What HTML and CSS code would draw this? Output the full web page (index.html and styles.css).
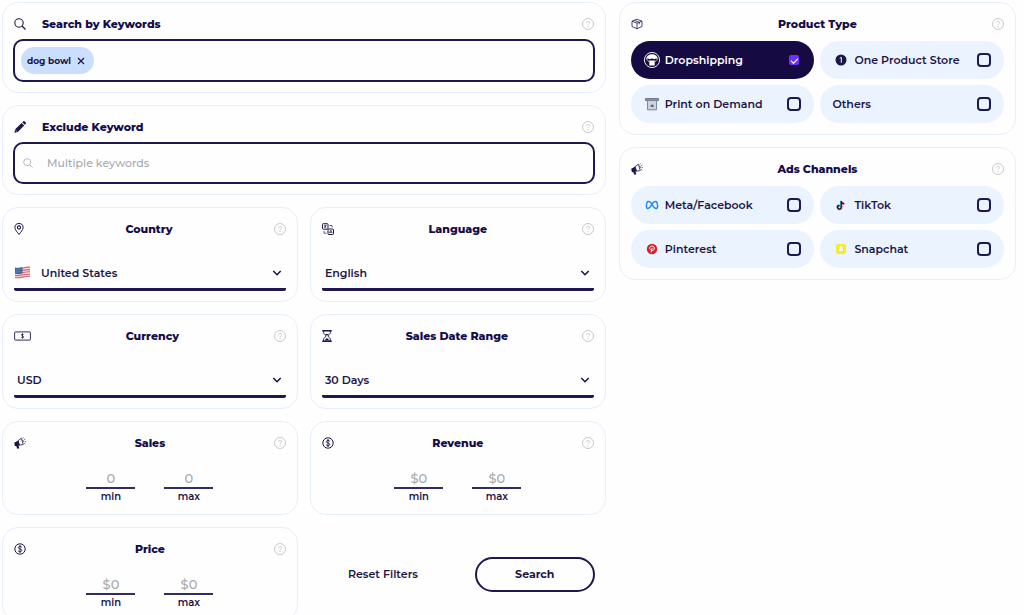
FILE: index.html
```html
<!DOCTYPE html>
<html lang="en">
<head>
    <meta charset="UTF-8">
    <meta name="viewport" content="width=device-width, initial-scale=1.0">
    <title>Product Search</title>
    <link rel="stylesheet" href="styles.css">
</head>
<body>
    <!-- Shared icons -->
    <svg class="sprite" aria-hidden="true">
        <symbol id="help" viewBox="0 0 12 12">
            <circle cx="6" cy="6" r="5.5" fill="none" stroke="currentColor" stroke-width="0.9"/>
            <path d="M4.5 4.9c0-2 3.1-2 3.1-.2 0 1.200-1.500 1.200-1.500 2.300" fill="none" stroke="currentColor" stroke-width="0.9"/>
            <circle cx="6.100" cy="8.700" r="0.600" fill="currentColor"/>
        </symbol>
        <symbol id="search" viewBox="0 0 12 12">
            <circle cx="5" cy="5" r="4.200" fill="none" stroke="currentColor" stroke-width="1.100"/>
            <path d="M8 8l3.500 3.500" stroke="currentColor" stroke-width="1.200"/>
        </symbol>
        <symbol id="horn" viewBox="0 0 12 12">
            <path d="M.2 5.800L4.300 3.400 5.800 8.200l-1.300.300.9 2.700-2.100.600-1-2.600-1.400-.2z" fill="currentColor"/>
            <path d="M4 3.700L7.300 1.200l2 6.300L5.300 8.200z" fill="none" stroke="currentColor" stroke-width="0.8"/>
            <path d="M8.300 3.200c1.300-.1 1.600 1.500.7 2M8.800 1.500l.6-1M10.200 2.800l1.200-.8M10.700 4.600l1.200.2M10.200 6.300l1 .9" fill="none" stroke="currentColor" stroke-width="0.7"/>
        </symbol>
        <symbol id="coin" viewBox="0 0 12 12">
            <circle cx="6" cy="6" r="5.200" fill="none" stroke="currentColor" stroke-width="1"/>
            <path d="M7.800 4.300C7.200 3 4.300 3.100 4.300 4.600c0 1.700 3.500 1 3.500 2.800 0 1.600-3 1.700-3.700.3M6 2v8" fill="none" stroke="currentColor" stroke-width="0.9"/>
        </symbol>
        <symbol id="chevron" viewBox="0 0 10 10">
            <path d="M1.300 3l3.700 3.700L8.700 3" fill="none" stroke="currentColor" stroke-width="1.600"/>
        </symbol>
    </svg>

    <form class="filters">
        <div class="column main">
            <section class="card wide">
                <div class="card-head">
                    <svg class="icon"><use href="#search"/></svg>
                    <label class="title" for="keywords">Search by Keywords</label>
                    <button type="button" class="help" aria-label="Help"><svg><use href="#help"/></svg></button>
                </div>
                <div class="field">
                    <span class="tag">dog bowl
                        <button type="button" aria-label="Remove dog bowl"><svg viewBox="0 0 8 8"><path d="M1 1l6 6M7 1L1 7" stroke="currentColor" stroke-width="1.200"/></svg></button>
                    </span>
                    <input type="text" id="keywords">
                </div>
            </section>

            <section class="card wide">
                <div class="card-head">
                    <svg class="icon" viewBox="0 0 12 12"><path d="M.3 11.700L1.200 8.200 7.600 1.900l2.600 2.500-6.400 6.500zM8.200 1.300L9.200.4c.5-.5 1-.4 1.500 0l1 1c.4.4.4 1 0 1.500l-.9.900z" fill="currentColor"/><path d="M1.300 9l1.600 1.500" stroke="#fff" stroke-width="0.6"/></svg>
                    <label class="title" for="exclude">Exclude Keyword</label>
                    <button type="button" class="help" aria-label="Help"><svg><use href="#help"/></svg></button>
                </div>
                <div class="field exclude">
                    <svg><use href="#search"/></svg>
                    <input type="text" id="exclude" placeholder="Multiple keywords">
                </div>
            </section>

            <section class="card">
                <div class="card-head">
                    <svg class="icon narrow" viewBox="0 0 10 12"><path d="M5 11.400C3.500 9.300.900 7 .900 4.600a4.100 4.100 0 0 1 8.200 0C9.100 7 6.500 9.300 5 11.400z" fill="none" stroke="currentColor"/><circle cx="5" cy="4.500" r="1.600" fill="none" stroke="currentColor" stroke-width="1.100"/></svg>
                    <label class="title" for="country">Country</label>
                    <button type="button" class="help" aria-label="Help"><svg><use href="#help"/></svg></button>
                </div>
                <div class="select">
                    <svg class="flag" viewBox="0 0 17 13">
                        <path d="M1 1.500C5 3 10 0 16 .8v10C11 10 6 13.500 1 12z" fill="#f3e4e8"/>
                        <path d="M8 2.300c3-.7 5-1.400 8-1M8 4.600c3-.7 5-1.300 8-1M8 6.800c3-.7 5-1.200 8-1M1 9.300c5 1.200 9-1.600 15-1M1 11.500c5 1.200 9-1.700 15-1.200" fill="none" stroke="#d9626f" stroke-width="1.200"/>
                        <path d="M1 1.500c2.500.9 5 .1 7.500-.4v6.500c-2.500.5-5 1-7.500.2z" fill="#41649f"/>
                        <path d="M2 3.600c2 .5 4 0 6-.5M2 5.800c2 .4 4 0 6-.5" stroke="#b8c8e2" stroke-width="0.600" stroke-dasharray="0.700 0.900" fill="none"/>
                    </svg>
                    <select id="country"><option>United States</option></select>
                    <svg class="chevron"><use href="#chevron"/></svg>
                </div>
            </section>

            <section class="card">
                <div class="card-head">
                    <svg class="icon" viewBox="0 0 12 12"><rect x=".5" y=".7" width="5.500" height="5.500" rx=".8" fill="none" stroke="currentColor"/><path d="M2 2.300h2.600M3.300 1.800v2M2 4.800l2.400-2M2.200 3.400l2.300 1.500" stroke="currentColor" stroke-width="0.600"/><rect x="6" y="6" width="5.500" height="5.500" rx=".8" fill="none" stroke="currentColor"/><path d="M7.300 10.200l1.500-3 1.500 3M7.800 9.300h2M2 7.800v2.400h2.500M7.500 2.500H10v2" fill="none" stroke="currentColor" stroke-width="0.700"/></svg>
                    <label class="title" for="language">Language</label>
                    <button type="button" class="help" aria-label="Help"><svg><use href="#help"/></svg></button>
                </div>
                <div class="select">
                    <select id="language"><option>English</option></select>
                    <svg class="chevron"><use href="#chevron"/></svg>
                </div>
            </section>

            <section class="card">
                <div class="card-head">
                    <svg class="icon banknote" viewBox="0 0 17 10"><rect x=".6" y=".9" width="15.800" height="8.200" rx="1" fill="none" stroke="currentColor" stroke-width="0.9"/><path d="M9.600 3.600c-.4-.8-2.200-.7-2.200.3 0 1.200 2.300.8 2.300 2 0 1.100-2 1.200-2.500.2M8.500 2.400v5.200" fill="none" stroke="currentColor" stroke-width="0.800"/></svg>
                    <label class="title" for="currency">Currency</label>
                    <button type="button" class="help" aria-label="Help"><svg><use href="#help"/></svg></button>
                </div>
                <div class="select">
                    <select id="currency"><option>USD</option></select>
                    <svg class="chevron"><use href="#chevron"/></svg>
                </div>
            </section>

            <section class="card">
                <div class="card-head">
                    <svg class="icon narrow" viewBox="0 0 10 12"><path d="M.3.800h9.400M.3 11.200h9.400" stroke="currentColor" stroke-width="1.400"/><path d="M1.600 1v1.500C1.600 4.500 4 5 4 6S1.600 7.500 1.600 9.500V11M8.400 1v1.500C8.400 4.500 6 5 6 6s2.400 1.500 2.400 3.500V11" fill="none" stroke="currentColor"/><path d="M3 4h4L5 5.700zM2.200 10.500L5 8l2.800 2.500z" fill="currentColor"/></svg>
                    <label class="title" for="dates">Sales Date Range</label>
                    <button type="button" class="help" aria-label="Help"><svg><use href="#help"/></svg></button>
                </div>
                <div class="select">
                    <select id="dates"><option>30 Days</option></select>
                    <svg class="chevron"><use href="#chevron"/></svg>
                </div>
            </section>

            <section class="card">
                <div class="card-head">
                    <svg class="icon"><use href="#horn"/></svg>
                    <h2 class="title">Sales</h2>
                    <button type="button" class="help" aria-label="Help"><svg><use href="#help"/></svg></button>
                </div>
                <div class="range">
                    <div class="limit"><input type="text" id="sales-min" placeholder="0"><label for="sales-min">min</label></div>
                    <div class="limit"><input type="text" id="sales-max" placeholder="0"><label for="sales-max">max</label></div>
                </div>
            </section>

            <section class="card">
                <div class="card-head">
                    <svg class="icon"><use href="#coin"/></svg>
                    <h2 class="title">Revenue</h2>
                    <button type="button" class="help" aria-label="Help"><svg><use href="#help"/></svg></button>
                </div>
                <div class="range">
                    <div class="limit"><input type="text" id="revenue-min" placeholder="$0"><label for="revenue-min">min</label></div>
                    <div class="limit"><input type="text" id="revenue-max" placeholder="$0"><label for="revenue-max">max</label></div>
                </div>
            </section>

            <section class="card">
                <div class="card-head">
                    <svg class="icon"><use href="#coin"/></svg>
                    <h2 class="title">Price</h2>
                    <button type="button" class="help" aria-label="Help"><svg><use href="#help"/></svg></button>
                </div>
                <div class="range">
                    <div class="limit"><input type="text" id="price-min" placeholder="$0"><label for="price-min">min</label></div>
                    <div class="limit"><input type="text" id="price-max" placeholder="$0"><label for="price-max">max</label></div>
                </div>
            </section>

            <div class="actions">
                <button type="reset" class="reset">Reset Filters</button>
                <button type="submit" class="submit">Search</button>
            </div>
        </div>

        <div class="column side">
            <section class="card">
                <div class="card-head">
                    <svg class="icon" viewBox="0 0 12 12"><path d="M1 3.200L6 1.200l5 2v5.300l-5 2.300-5-2.300zM1 3.200l5 2 5-2M6 5.200v5.600M3.300 2.300l5 2v2" fill="none" stroke="currentColor" stroke-width="0.8" stroke-linejoin="round"/></svg>
                    <h2 class="title">Product Type</h2>
                    <button type="button" class="help" aria-label="Help"><svg><use href="#help"/></svg></button>
                </div>
                <div class="options">
                    <label class="option active">
                        <svg viewBox="0 0 18 18"><circle cx="9" cy="9" r="7.600" fill="none" stroke="currentColor" stroke-width="0.9"/><path d="M3.200 8.200C3.400 1.700 14.600 1.700 14.800 8.200 13.600 7.300 12.500 7.300 11.400 8.200 10 7.300 8 7.300 6.600 8.200 5.500 7.300 4.400 7.300 3.200 8.200z" fill="currentColor"/><path d="M3.500 8.200l3 3M14.500 8.200l-3 3" stroke="currentColor" stroke-width="0.800"/><path d="M6.300 9.500h5.400v5H6.300z" fill="currentColor"/></svg>
                        <span>Dropshipping</span>
                        <input type="checkbox" checked>
                    </label>
                    <label class="option">
                        <svg viewBox="0 0 18 18"><circle cx="9" cy="9" r="5.500" fill="currentColor"/><path d="M7.700 7.300L9.300 6.300v5.500" fill="none" stroke="#eaf2ff" stroke-width="1"/></svg>
                        <span>One Product Store</span>
                        <input type="checkbox">
                    </label>
                    <label class="option">
                        <svg viewBox="0 0 18 18"><path d="M2.500 3.500h13v2h-13z" fill="#8f92a8" stroke="#55577a" stroke-width="0.700"/><path d="M4.500 5.500h9v9.300h-9z" fill="#cdd2df" stroke="#77798f" stroke-width="0.900"/><path d="M7.500 11h3.300M9.200 9.600v2" stroke="#33345c" stroke-width="1"/></svg>
                        <span>Print on Demand</span>
                        <input type="checkbox">
                    </label>
                    <label class="option">
                        <span>Others</span>
                        <input type="checkbox">
                    </label>
                </div>
            </section>

            <section class="card">
                <div class="card-head">
                    <svg class="icon"><use href="#horn"/></svg>
                    <h2 class="title">Ads Channels</h2>
                    <button type="button" class="help" aria-label="Help"><svg><use href="#help"/></svg></button>
                </div>
                <div class="options">
                    <label class="option">
                        <svg viewBox="0 0 18 18"><path d="M9 8.300C7.700 5.900 6.600 5.500 5.700 5.500 4.200 5.500 3.400 8 3.400 10.200c0 1.500.6 2.300 1.500 2.300 1.500 0 2.500-2 4.100-4.500 1-1.600 2-2.500 3.200-2.500 1.600 0 2.400 2.500 2.400 4.700 0 1.500-.6 2.300-1.500 2.300C11.600 12.500 10.500 10.800 9 8.300z" fill="none" stroke="#2185f5" stroke-width="1.400"/></svg>
                        <span>Meta/Facebook</span>
                        <input type="checkbox">
                    </label>
                    <label class="option">
                        <svg viewBox="0 0 18 18"><path d="M9.200 5v6.300a1.900 1.900 0 1 1-1.700-2M9.200 5c.2 1.700 1.300 2.500 2.800 2.600" transform="translate(-.5 -.4)" fill="none" stroke="#4fd3d8" stroke-width="1.300"/><path d="M9.200 5v6.300a1.900 1.900 0 1 1-1.700-2M9.200 5c.2 1.700 1.300 2.500 2.800 2.600" transform="translate(.6 .4)" fill="none" stroke="#ee4b70" stroke-width="1.300"/><path d="M9.200 5v6.300a1.900 1.900 0 1 1-1.700-2M9.200 5c.2 1.700 1.300 2.500 2.800 2.600" fill="none" stroke="#17152f" stroke-width="1.300"/></svg>
                        <span>TikTok</span>
                        <input type="checkbox">
                    </label>
                    <label class="option">
                        <svg viewBox="0 0 18 18"><circle cx="9" cy="9" r="5.200" fill="#d1222e"/><path d="M7.300 9.700c-1.600-2 .1-3.700 1.800-3.700 3 0 2.700 4.400.6 4.400-.6 0-1-.3-1-.6M9.200 7.700L8 12.400" fill="none" stroke="#fff" stroke-width="1"/></svg>
                        <span>Pinterest</span>
                        <input type="checkbox">
                    </label>
                    <label class="option">
                        <svg viewBox="0 0 18 18"><rect x="4" y="4" width="10" height="10" rx="2" fill="#f4ee22"/><path d="M9 5.600c1.500 0 2 1 1.900 2.700l.2 1.200.9.900-1.300.5-.4.700H9.600L9 12l-.6-.4h-.7l-.4-.7-1.300-.5.9-.9.200-1.200C7 6.600 7.500 5.600 9 5.600z" fill="#fff" stroke="#c5c02a" stroke-width="0.400"/></svg>
                        <span>Snapchat</span>
                        <input type="checkbox">
                    </label>
                </div>
            </section>
        </div>
    </form>
</body>
</html>
```

FILE: styles.css
```css
* {
    box-sizing: border-box;
}

body {
    font-family: 'Montserrat', 'Inter', sans-serif;
    font-size: 11px;
    margin: 0;
    padding: 2px 8px 0 2px;
    background-color: #fefefe;
    color: #1d1646;
}

input, select, button {
    font: inherit;
    color: inherit;
    background: none;
    border: none;
    border-radius: 0;
    outline: none;
    margin: 0;
    padding: 0;
}

button {
    cursor: pointer;
}

svg {
    display: block;
    flex: none;
}

.sprite {
    display: none;
}

.filters {
    display: grid;
    grid-template-columns: 1.52fr 1fr;
    gap: 13px;
    align-items: start;
}

.column {
    display: grid;
    gap: 12px;
}

.main {
    grid-template-columns: 1fr 1fr;
}

/* Cards */
.card {
    border: 1px solid #e8effc;
    border-radius: 16px;
    padding: 12px 11px 10px;
}

.wide {
    grid-column: span 2;
    padding: 12px 10px 10px;
}

.card-head {
    display: flex;
    justify-content: space-between;
    align-items: center;
    height: 18px;
}

.wide .card-head {
    gap: 16px;
    padding: 0 1px;
}

.title {
    font-size: 11px;
    font-weight: 800;
    line-height: 18px;
    margin: 0;
    color: #150c4a;
}

.wide .title {
    flex: 1;
}

.icon {
    width: 12px;
    height: 12px;
}

.narrow {
    width: 10px;
}

.banknote {
    width: 17px;
    height: 10px;
}

.help {
    color: #c4c4c8;
}

.help svg {
    width: 12px;
    height: 12px;
}

/* Keyword boxes */
.field {
    display: flex;
    align-items: center;
    gap: 8px;
    height: 43px;
    margin-top: 6px;
    padding: 0 6px;
    border: 2px solid #1f1850;
    border-radius: 10px;
}

.field input {
    flex: 1;
    min-width: 0;
}

.tag {
    display: flex;
    align-items: center;
    gap: 6px;
    height: 27px;
    padding: 0 9px 0 6px;
    border-radius: 14px;
    background-color: #c9dffd;
    font-size: 9px;
    font-weight: 700;
}

.tag svg {
    width: 8px;
    height: 8px;
}

.exclude {
    height: 42px;
    gap: 14px;
    padding: 0 8px;
    font-weight: 500;
}

.exclude svg {
    width: 10px;
    height: 10px;
    color: #b4b4b8;
}

::placeholder {
    color: #a9a9ad;
    opacity: 1;
}

/* Drop-downs */
.select {
    display: flex;
    align-items: center;
    height: 34px;
    margin-top: 19px;
    padding: 0 4px 0 3px;
    border-bottom: 3px solid #1f1850;
    border-radius: 2px;
}

.select select {
    flex: 1;
    appearance: none;
    font-weight: 600;
}

.flag {
    width: 17px;
    height: 13px;
    margin: 0 10px 0 -3px;
}

.chevron {
    width: 10px;
    height: 10px;
}

/* Min and max */
.range {
    display: flex;
    justify-content: center;
    gap: 29px;
    margin-top: 16px;
}

.limit {
    display: flex;
    flex-direction: column;
    width: 49px;
    text-align: center;
}

.limit input {
    width: 100%;
    height: 21px;
    border-bottom: 2px solid #332c60;
    text-align: center;
    font-size: 13px;
    font-weight: 500;
}

.limit label {
    font-size: 10px;
    font-weight: 600;
    line-height: 15px;
}

/* Buttons */
.actions {
    display: flex;
    align-items: center;
    justify-content: space-between;
    padding: 0 11px 0 38px;
}

.reset {
    font-weight: 600;
}

.submit {
    width: 120px;
    height: 35px;
    border: 2px solid #1f1850;
    border-radius: 18px;
    font-weight: 700;
}

/* Option pills */
.options {
    display: grid;
    grid-template-columns: 1fr 1fr;
    gap: 6px;
    margin: 8px 0 1px;
}

.option {
    display: flex;
    align-items: center;
    gap: 4px;
    height: 38px;
    padding: 0 13px 0 12px;
    border-radius: 19px;
    background-color: #ebf3ff;
    font-weight: 600;
    cursor: pointer;
}

.option svg {
    width: 18px;
    height: 18px;
}

.option span {
    flex: 1;
}

.option input {
    appearance: none;
    width: 14px;
    height: 14px;
    border: 2px solid #1f1850;
    border-radius: 4px;
}

.active {
    background-color: #150a42;
    color: #fff;
}

.option input:checked {
    display: grid;
    place-items: center;
    width: 10px;
    height: 10px;
    margin-right: 2px;
    border: none;
    border-radius: 2px;
    background-color: #6a35f2;
}

.option input:checked::after {
    content: '';
    width: 6px;
    height: 3px;
    border: solid #fff;
    border-width: 0 0 1px 1px;
    transform: rotate(-45deg);
}
```
